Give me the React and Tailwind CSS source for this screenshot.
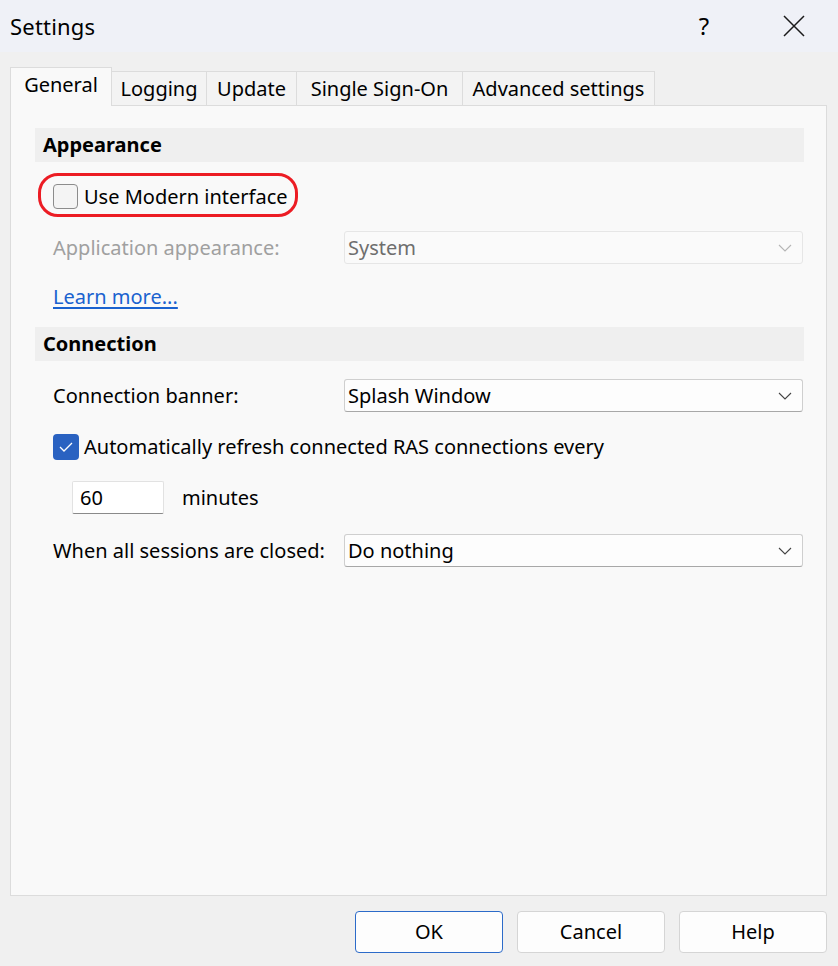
import React from 'react';

const font = { fontFamily: '"Noto Sans", "Open Sans", sans-serif' };

const Chevron = ({ light }) => (
    <svg width="14" height="8" viewBox="0 0 14 8" className="mr-[10px]">
        <path d="M1 1 L7 7 L13 1" fill="none" stroke={light ? '#b5b5b5' : '#444'} strokeWidth="1.1" />
    </svg>
);

const Combo = ({ value, disabled }) => (
    <div
        className={
            'w-[459px] h-[33px] flex items-center justify-between rounded-[3px] border ' +
            (disabled
                ? 'border-[#e6e6e6] bg-[#fafafa] text-[#6e6e6e]'
                : 'border-[#cfcfcf] border-b-[#a8a8a8] bg-[#fdfdfd] text-black')
        }
    >
        <span className="pl-[3px] text-[20px] leading-none">{value}</span>
        <Chevron light={disabled} />
    </div>
);

const SectionHeader = ({ children }) => (
    <div className="h-[34px] bg-[#efefef] flex items-center pl-[8px] text-[20px] font-bold text-black">
        {children}
    </div>
);

const Tab = ({ label, width, active }) => (
    <div
        className={
            'flex items-center justify-center border-t border-l border-r border-[#dcdcdc] -mr-px text-[20px] ' +
            (active ? 'h-[39px] bg-[#f9f9f9] relative z-10 -mb-px pb-[4px]' : 'h-[34px] bg-[#f3f3f3]')
        }
        style={{ width }}
    >
        {label}
    </div>
);

const App = () => {
    return (
        <div className="w-[838px] h-[966px] bg-[#f0f0f0] flex flex-col text-black overflow-hidden" style={font}>
            {/* Title bar */}
            <div className="h-[52px] bg-[#eff1f7] flex items-center justify-between pl-[10px] pr-[4px]">
                <span className="text-[22px] tracking-[0.2px]">Settings</span>
                <div className="flex items-center">
                    <span className="text-[24px] w-[90px] text-center pl-[10px]">?</span>
                    <div className="w-[90px] h-[52px] flex items-center justify-center pl-[10px]">
                        <svg width="22" height="22" viewBox="0 0 22 22">
                            <path d="M1 1 L21 21 M21 1 L1 21" stroke="#1a1a1a" strokeWidth="1.5" />
                        </svg>
                    </div>
                </div>
            </div>

            {/* Tabs */}
            <div className="flex items-end pl-[10px] pt-[15px]">
                <Tab label="General" width={102} active />
                <Tab label="Logging" width={96} />
                <Tab label="Update" width={91} />
                <Tab label="Single Sign-On" width={167} />
                <Tab label="Advanced settings" width={193} />
            </div>

            {/* Panel */}
            <div className="ml-[10px] w-[817px] h-[791px] border border-[#dcdcdc] bg-[#f9f9f9] pl-[24px] pr-[22px] pt-[22px]">
                <SectionHeader>Appearance</SectionHeader>

                <div className="mt-[11px] pl-[3px]">
                    <div className="w-[260px] h-[44px] border-[3px] border-[#ec1c24] rounded-[20px] flex items-center pl-[12px] pt-[3px]">
                        <div className="w-[25px] h-[25px] rounded-[4px] border border-[#8c8c8c] bg-[#f4f4f4]" />
                        <span className="ml-[6px] text-[20px]">Use Modern interface</span>
                    </div>
                </div>

                <div className="mt-[14px] flex items-center pl-[18px]">
                    <span className="w-[291px] text-[20px] text-[#a0a0a0]">Application appearance:</span>
                    <Combo value="System" disabled />
                </div>

                <div className="mt-[19px] h-[28px] flex items-center pl-[18px]">
                    <span className="text-[20px] text-[#1a62cf] underline underline-offset-[3px]">Learn more...</span>
                </div>

                <div className="mt-[16px]">
                    <SectionHeader>Connection</SectionHeader>
                </div>

                <div className="mt-[18px] flex items-center pl-[18px]">
                    <span className="w-[291px] text-[20px]">Connection banner:</span>
                    <Combo value="Splash Window" />
                </div>

                <div className="mt-[21px] h-[28px] flex items-center pl-[18px]">
                    <div className="w-[26px] h-[26px] rounded-[4px] bg-[#2a62c1] flex items-center justify-center">
                        <svg width="14" height="10" viewBox="0 0 14 10">
                            <path d="M1 5 L5 9 L13 1" fill="none" stroke="#fff" strokeWidth="1.3" />
                        </svg>
                    </div>
                    <span className="ml-[5px] text-[20px]">Automatically refresh connected RAS connections every</span>
                </div>

                <div className="mt-[20px] flex items-center pl-[37px]">
                    <div className="w-[92px] h-[33px] bg-white border border-[#e2e2e2] border-b-[#8a8a8a] rounded-[2px] flex items-center pl-[7px] text-[20px]">
                        60
                    </div>
                    <span className="ml-[18px] text-[20px]">minutes</span>
                </div>

                <div className="mt-[20px] flex items-center pl-[18px]">
                    <span className="w-[291px] text-[20px]">When all sessions are closed:</span>
                    <Combo value="Do nothing" />
                </div>
            </div>

            {/* Buttons */}
            <div className="mt-[15px] flex justify-end gap-[14px] pr-[11px]">
                <button className="w-[148px] h-[42px] rounded-[4px] border border-[#2c6bc9] bg-[#fdfdfd] text-[20px]">
                    OK
                </button>
                <button className="w-[148px] h-[42px] rounded-[4px] border border-[#d5d5d5] bg-[#fdfdfd] text-[20px]">
                    Cancel
                </button>
                <button className="w-[148px] h-[42px] rounded-[4px] border border-[#d5d5d5] bg-[#fdfdfd] text-[20px]">
                    Help
                </button>
            </div>
        </div>
    );
};

export default App;
